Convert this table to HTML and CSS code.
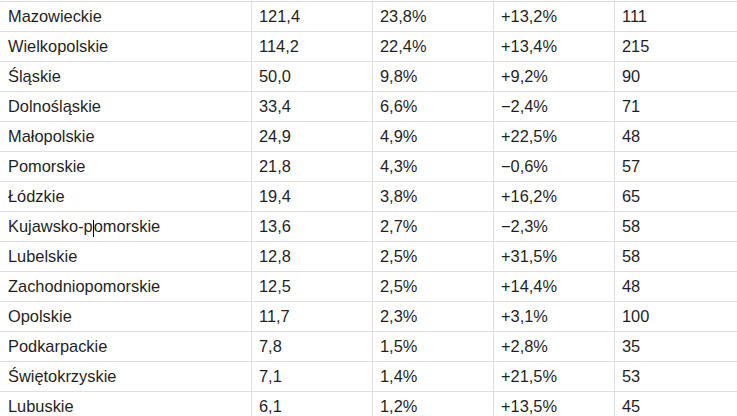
FILE: index.html
```html
<!DOCTYPE html>
<html lang="pl">
<head>
<meta charset="utf-8">
<title>Województwa</title>
<link rel="stylesheet" href="styles.css">
</head>
<body>
<div class="sheet">
  <div class="row"><div class="cell name">Mazowieckie</div><div class="cell">121,4</div><div class="cell">23,8%</div><div class="cell">+13,2%</div><div class="cell last">111</div></div>
  <div class="row"><div class="cell name">Wielkopolskie</div><div class="cell">114,2</div><div class="cell">22,4%</div><div class="cell">+13,4%</div><div class="cell last">215</div></div>
  <div class="row"><div class="cell name">Śląskie</div><div class="cell">50,0</div><div class="cell">9,8%</div><div class="cell">+9,2%</div><div class="cell last">90</div></div>
  <div class="row"><div class="cell name">Dolnośląskie</div><div class="cell">33,4</div><div class="cell">6,6%</div><div class="cell">−2,4%</div><div class="cell last">71</div></div>
  <div class="row"><div class="cell name">Małopolskie</div><div class="cell">24,9</div><div class="cell">4,9%</div><div class="cell">+22,5%</div><div class="cell last">48</div></div>
  <div class="row"><div class="cell name">Pomorskie</div><div class="cell">21,8</div><div class="cell">4,3%</div><div class="cell">−0,6%</div><div class="cell last">57</div></div>
  <div class="row"><div class="cell name">Łódzkie</div><div class="cell">19,4</div><div class="cell">3,8%</div><div class="cell">+16,2%</div><div class="cell last">65</div></div>
  <div class="row"><div class="cell name">Kujawsko-p<span class="caret"></span>omorskie</div><div class="cell">13,6</div><div class="cell">2,7%</div><div class="cell">−2,3%</div><div class="cell last">58</div></div>
  <div class="row"><div class="cell name">Lubelskie</div><div class="cell">12,8</div><div class="cell">2,5%</div><div class="cell">+31,5%</div><div class="cell last">58</div></div>
  <div class="row"><div class="cell name">Zachodniopomorskie</div><div class="cell">12,5</div><div class="cell">2,5%</div><div class="cell">+14,4%</div><div class="cell last">48</div></div>
  <div class="row"><div class="cell name">Opolskie</div><div class="cell">11,7</div><div class="cell">2,3%</div><div class="cell">+3,1%</div><div class="cell last">100</div></div>
  <div class="row"><div class="cell name">Podkarpackie</div><div class="cell">7,8</div><div class="cell">1,5%</div><div class="cell">+2,8%</div><div class="cell last">35</div></div>
  <div class="row"><div class="cell name">Świętokrzyskie</div><div class="cell">7,1</div><div class="cell">1,4%</div><div class="cell">+21,5%</div><div class="cell last">53</div></div>
  <div class="row"><div class="cell name">Lubuskie</div><div class="cell">6,1</div><div class="cell">1,2%</div><div class="cell">+13,5%</div><div class="cell last">45</div></div>
</div>
</body>
</html>
```

FILE: styles.css
```css
html, body {
  margin: 0;
  padding: 0;
  background: #ffffff;
  overflow: hidden;
}

body {
  font-family: "Liberation Sans", Arial, sans-serif;
  font-size: 16.4px;
  color: #1f1f1f;
}

.sheet {
  margin-top: 1px;
  border-top: 1px solid #dfdfdf;
}

.row {
  display: grid;
  grid-template-columns: 252px 121px 121px 121px 1fr;
}

.cell {
  box-sizing: border-box;
  height: 30px;
  border-right: 1px solid #dfdfdf;
  border-bottom: 1px solid #dfdfdf;
  padding-left: 7px;
  display: flex;
  align-items: center;
  white-space: nowrap;
  overflow: hidden;
}

.cell.name {
  padding-left: 8px;
}

.cell.last {
  border-right: none;
}

.caret {
  display: inline-block;
  width: 1px;
  height: 17px;
  background: #000000;
  margin-bottom: -3px;
}
```
